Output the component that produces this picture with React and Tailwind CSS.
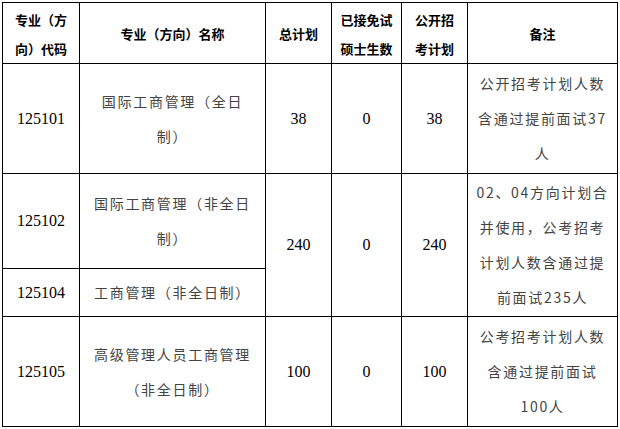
const cjk = "font-['Noto_Sans_CJK_SC',sans-serif]";
const serif = "font-['Liberation_Serif',serif] text-[16px] text-black";

const Th = ({ children }) => (
  <th className={`${cjk} border border-black text-[13px] leading-[29px] font-bold text-black text-center align-middle pt-[1px]`}>
    {children}
  </th>
);

const Num = ({ children, rowSpan }) => (
  <td rowSpan={rowSpan} className={`${serif} border border-black text-center align-middle`}>
    {children}
  </td>
);

const Txt = ({ children, rowSpan }) => (
  <td
    rowSpan={rowSpan}
    className={`${cjk} border border-black text-[14px] leading-[35px] tracking-[1.7px] text-[#444] text-center align-middle whitespace-nowrap`}
  >
    {children}
  </td>
);

export default function App() {
  return (
    <div className="bg-white w-[620px] h-[429px] pt-[2px] pl-[2px]">
      <table className="table-fixed border-collapse w-[615px]">
        <colgroup>
          <col className="w-[77px]" />
          <col className="w-[186px]" />
          <col className="w-[66px]" />
          <col className="w-[70px]" />
          <col className="w-[66px]" />
          <col className="w-[150px]" />
        </colgroup>
        <tbody>
          <tr className="h-[61px]">
            <Th>专业（方<br />向）代码</Th>
            <Th>专业（方向）名称</Th>
            <Th>总计划</Th>
            <Th>已接免试<br />硕士生数</Th>
            <Th>公开招<br />考计划</Th>
            <Th>备注</Th>
          </tr>
          <tr className="h-[110px]">
            <Num>125101</Num>
            <Txt>国际工商管理（全日<br />制）</Txt>
            <Num>38</Num>
            <Num>0</Num>
            <Num>38</Num>
            <Txt>公开招考计划人数<br />含通过提前面试37<br />人</Txt>
          </tr>
          <tr className="h-[95px]">
            <Num>125102</Num>
            <Txt>国际工商管理（非全日<br />制）</Txt>
            <Num rowSpan={2}>240</Num>
            <Num rowSpan={2}>0</Num>
            <Num rowSpan={2}>240</Num>
            <Txt rowSpan={2}>02、04方向计划合<br />并使用，公考招考<br />计划人数含通过提<br />前面试235人</Txt>
          </tr>
          <tr className="h-[48px]">
            <Num>125104</Num>
            <Txt>工商管理（非全日制）</Txt>
          </tr>
          <tr className="h-[110px]">
            <Num>125105</Num>
            <Txt>高级管理人员工商管理<br />（非全日制）</Txt>
            <Num>100</Num>
            <Num>0</Num>
            <Num>100</Num>
            <Txt>公考招考计划人数<br />含通过提前面试<br />100人</Txt>
          </tr>
        </tbody>
      </table>
    </div>
  );
}
